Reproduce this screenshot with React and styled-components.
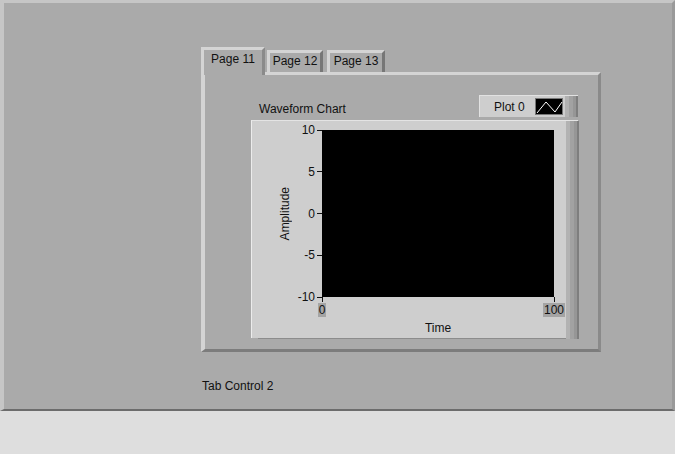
import React from 'react';
import styled, { createGlobalStyle } from 'styled-components';

/* palette */
const PANEL = '#aaaaaa';
const LIGHT = '#cecece';
const HILITE = '#d4d4d4';
const SHADE = '#7c7c7c';

const GlobalStyle = createGlobalStyle`
    html, body {
        margin: 0;
        padding: 0;
        background: #dedede;
    }
    body {
        font-family: "Liberation Sans", Arial, sans-serif;
        font-size: 12px;
        color: #111;
    }
`;

const Screen = styled.div`
    width: 675px;
    height: 454px;
    display: flex;
    flex-direction: column;
    background: #dedede;
`;

const FrontPanel = styled.div`
    box-sizing: border-box;
    height: 411px;
    background: ${PANEL};
    border-top: 3px solid #c6c6c6;
    border-left: 4px solid #c6c6c6;
    border-right: 3px solid #9a9a9a;
    border-bottom: 2px solid #6c6c6c;
    padding: 44px 0 0 197px;
`;

const TabControl = styled.div`
    display: flex;
    flex-direction: column;
    width: 400px;
`;

const TabRow = styled.div`
    display: flex;
    align-items: flex-end;
    height: 25px;
    position: relative;
    z-index: 1;
`;

const Tab = styled.div`
    box-sizing: border-box;
    width: ${p => p.w}px;
    margin-left: ${p => p.gap || 0}px;
    height: ${p => (p.active ? 28 : 22)}px;
    margin-bottom: ${p => (p.active ? -3 : 0)}px;
    background: ${PANEL};
    border-top: 3px solid ${HILITE};
    border-left: 3px solid ${HILITE};
    border-right: 3px solid ${p => (p.active ? '#8a8a8a' : '#777')};
    display: flex;
    justify-content: center;
    padding-top: ${p => (p.active ? 2 : 1)}px;
    line-height: 15px;
`;

const TabPanel = styled.div`
    box-sizing: border-box;
    width: 400px;
    height: 280px;
    border-top: 3px solid ${HILITE};
    border-left: 4px solid ${HILITE};
    border-right: 3px solid #8a8a8a;
    border-bottom: 3px solid ${SHADE};
    padding: 20px 0 0 46px;
`;

const Caption = styled.div`
    margin: 27px 0 0 1px;
    line-height: 14px;
`;

const Chart = styled.div`
    display: flex;
    flex-direction: column;
    width: 327px;
    gap: 3px;
`;

const ChartHeader = styled.div`
    display: flex;
    justify-content: space-between;
    align-items: flex-end;
    height: 22px;
`;

const ChartLabel = styled.span`
    margin: 0 0 1px 8px;
    line-height: 14px;
`;

const Bevel = styled.div`
    width: 13px;
    flex: none;
    align-self: stretch;
    background: linear-gradient(to right,
        #b2b2b2 0 4px, #a2a2a2 4px 8px, #969696 8px 11px, #7e7e7e 11px 13px);
`;

const Legend = styled.div`
    box-sizing: border-box;
    width: 99px;
    height: 22px;
    display: flex;
    align-items: center;
    background: ${LIGHT};
    border-top: 1px solid #e2e2e2;
    border-left: 1px solid #e2e2e2;
`;

const LegendName = styled.span`
    margin-left: 14px;
    width: 41px;
`;

const Swatch = styled.svg`
    display: block;
    width: 28px;
    height: 17px;
    margin-right: 2px;
`;

const Frame = styled.div`
    box-sizing: border-box;
    height: 218px;
    display: grid;
    grid-template-columns: 70px 232px 12px 13px;
    grid-template-rows: 9px 167px 42px;
    background: ${LIGHT};
    border-top: 1px solid #e4e4e4;
    border-left: 1px solid #ececec;
`;

const FrameBevel = styled(Bevel)`
    grid-column: 4;
    grid-row: 1 / 4;
    height: 100%;
`;

const YAxis = styled.div`
    grid-column: 1;
    grid-row: 2;
    display: flex;
    align-items: stretch;
`;

const AxisTitle = styled.div`
    flex: none;
    width: 40px;
    margin-left: 13px;
    display: flex;
    align-items: center;
    justify-content: center;
`;

const Vertical = styled.span`
    writing-mode: vertical-rl;
    transform: rotate(180deg);
    line-height: 14px;
`;

const YScale = styled.div`
    flex: 1;
    min-width: 0;
    display: flex;
    flex-direction: column;
    justify-content: space-between;
    align-items: flex-end;
`;

const YTick = styled.div`
    height: 0;
    display: flex;
    align-items: center;
    gap: 2px;
    white-space: nowrap;
    line-height: 14px;
`;

const TickMark = styled.span`
    display: block;
    background: #111;
    width: ${p => (p.vertical ? 1 : 5)}px;
    height: ${p => (p.vertical ? 5 : 1)}px;
`;

const Plot = styled.div`
    grid-column: 2;
    grid-row: 2;
    background: #000;
`;

const XAxis = styled.div`
    grid-column: 2;
    grid-row: 3;
    display: flex;
    flex-direction: column;
`;

const XScale = styled.div`
    display: flex;
    justify-content: space-between;
`;

const XTick = styled.div`
    width: 0;
    display: flex;
    flex-direction: column;
    align-items: center;
`;

const XValue = styled.span`
    margin-top: 1px;
    padding: 0 1px;
    background: #a4a4a4;
    line-height: 14px;
    white-space: nowrap;
`;

const XTitle = styled.div`
    margin-top: 4px;
    text-align: center;
    line-height: 14px;
`;

const BottomEdge = styled.div`
    grid-column: 1 / 4;
    grid-row: 3;
    align-self: end;
    margin-left: 6px;
    height: 1px;
    background: #8c8c8c;
`;

const yLabels = ['10', '5', '0', '-5', '-10'];

export default function App() {
    return (
        <Screen>
            <GlobalStyle />
            <FrontPanel>
                <TabControl>
                    <TabRow>
                        <Tab active w={64}>Page 11</Tab>
                        <Tab w={56} gap={2}>Page 12</Tab>
                        <Tab w={58} gap={4}>Page 13</Tab>
                    </TabRow>
                    <TabPanel>
                        <Chart>
                            <ChartHeader>
                                <ChartLabel>Waveform Chart</ChartLabel>
                                <Legend>
                                    <LegendName>Plot 0</LegendName>
                                    <Swatch viewBox="0 0 28 17">
                                        <rect x="0" y="0" width="28" height="17" fill="#000" />
                                        <rect x="0.5" y="0.5" width="27" height="16" fill="none" stroke="#777" />
                                        <polyline points="2,15 11,4 20,14 27,4" fill="none" stroke="#fff" strokeWidth="1" />
                                    </Swatch>
                                    <Bevel />
                                </Legend>
                            </ChartHeader>
                            <Frame>
                                <YAxis>
                                    <AxisTitle><Vertical>Amplitude</Vertical></AxisTitle>
                                    <YScale>
                                        {yLabels.map(v => (
                                            <YTick key={v}>{v}<TickMark /></YTick>
                                        ))}
                                    </YScale>
                                </YAxis>
                                <Plot />
                                <XAxis>
                                    <XScale>
                                        <XTick><TickMark vertical /><XValue>0</XValue></XTick>
                                        <XTick><TickMark vertical /><XValue>100</XValue></XTick>
                                    </XScale>
                                    <XTitle>Time</XTitle>
                                </XAxis>
                                <BottomEdge />
                                <FrameBevel />
                            </Frame>
                        </Chart>
                    </TabPanel>
                    <Caption>Tab Control 2</Caption>
                </TabControl>
            </FrontPanel>
        </Screen>
    );
}
